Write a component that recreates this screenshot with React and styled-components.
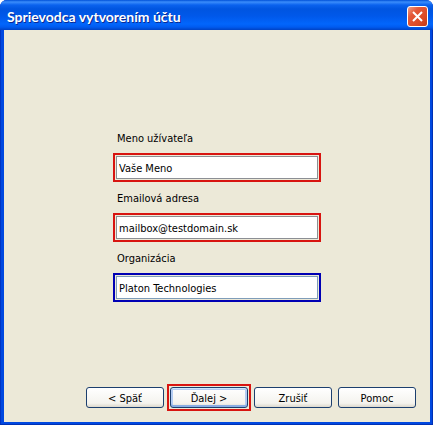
import React from "react";
import styled, { createGlobalStyle } from "styled-components";

const GlobalStyle = createGlobalStyle`
  * {
    box-sizing: border-box;
  }
  body {
    margin: 0;
    background: #fff;
    font-family: "DejaVu Sans Condensed", "Noto Sans", sans-serif;
    font-size: 11px;
    color: #000;
  }
`;

const Window = styled.div`
  display: flex;
  flex-direction: column;
  min-height: 100vh;
  border-radius: 7px 7px 0 0;
  background: #0048e0;
  box-shadow: inset -1px -1px 0 #0030b4, inset 1px 0 0 #0034c4;
  overflow: hidden;
`;

const TitleBar = styled.header`
  display: flex;
  align-items: center;
  justify-content: space-between;
  height: 30px;
  padding: 3px 5px 0 7px;
  background: linear-gradient(
    #0050d8 0,
    #3b8dfb 2px,
    #0a62ee 5px,
    #0055e0 9px,
    #0058ea 16px,
    #0266fc 24px,
    #005bf0 27px,
    #0042c4 30px
  );
`;

const Title = styled.h1`
  margin: 0;
  font-family: Lato, sans-serif;
  font-size: 14px;
  line-height: 20px;
  font-weight: 700;
  color: #fff;
  text-shadow: 1px 1px 0 #0a2a94;
`;

const CloseButton = styled.button`
  display: flex;
  align-items: center;
  justify-content: center;
  width: 21px;
  height: 21px;
  padding: 0;
  border: 1px solid #fff;
  border-radius: 3px;
  background: linear-gradient(135deg, #f0a088 0, #e4593a 30%, #dc4a24 70%, #c03a18);
`;

const Body = styled.main`
  display: flex;
  flex: 1;
  flex-direction: column;
  margin: 0 3px 3px 4px;
  background: #ece9d8;
`;

const Form = styled.form`
  display: flex;
  flex: 1;
  flex-direction: column;
`;

const Fields = styled.div`
  display: flex;
  flex: 1;
  flex-direction: column;
  gap: 9px;
  width: 208px;
  margin: 0 auto;
  padding-top: 101px;
`;

const Label = styled.label`
  display: block;
  padding: 0 4px;
  margin-bottom: 6px;
  line-height: 16px;
`;

const Frame = styled.div`
  padding: 1px;
  border: 2px solid ${props => props.$color};
`;

const Input = styled.input`
  display: block;
  width: 100%;
  height: 23px;
  padding: 2px 2px 0;
  border: 1px solid ${props => props.$line};
  background: #fff;
  color: #000;
  font: inherit;
  outline: none;
`;

const Buttons = styled.footer`
  display: flex;
  justify-content: flex-end;
  gap: 6px;
  padding: 14px;
`;

const Button = styled.button`
  display: block;
  width: 78px;
  height: 21px;
  padding: 2px 0 0;
  border: 1px solid #1c3f6e;
  border-radius: 3px;
  background: linear-gradient(#fff, #f4f3ee 80%, #dcd8cc);
  color: #000;
  font: inherit;
  line-height: 16px;
`;

const ButtonFrame = styled(Frame)`
  margin: -3px;
`;

const DefaultButton = styled(Button)`
  box-shadow: inset 0 1px 0 #cee7ff, inset 0 -2px 0 #89ade4, inset 0 0 0 2px #b4ccf2;
`;

const red = "#d81410";

const fields = [
  { id: "name", label: "Meno užívateľa", value: "Vaše Meno", color: red, line: "#8c8f94" },
  { id: "email", label: "Emailová adresa", value: "mailbox@testdomain.sk", color: red, line: "#8c8f94" },
  { id: "org", label: "Organizácia", value: "Platon Technologies", color: "#0000b4", line: "#7f9db9" }
];

const handleSubmit = e => {
  e.preventDefault();
};

const App = () => {
  return (
    <>
      <GlobalStyle />
      <Window>
        <TitleBar>
          <Title>Sprievodca vytvorením účtu</Title>
          <CloseButton type="button" aria-label="Zavrieť">
            <svg width="13" height="13" viewBox="0 0 13 13">
              <path d="M2 2L11 11M11 2L2 11" stroke="#fff" strokeWidth="2" />
            </svg>
          </CloseButton>
        </TitleBar>
        <Body>
          <Form onSubmit={handleSubmit}>
            <Fields>
              {fields.map(field => (
                <div key={field.id}>
                  <Label htmlFor={field.id}>{field.label}</Label>
                  <Frame $color={field.color}>
                    <Input id={field.id} type="text" defaultValue={field.value} $line={field.line} spellCheck={false} />
                  </Frame>
                </div>
              ))}
            </Fields>
            <Buttons>
              <Button type="button">&lt; Späť</Button>
              <ButtonFrame $color={red}>
                <DefaultButton type="submit">Ďalej &gt;</DefaultButton>
              </ButtonFrame>
              <Button type="button">Zrušiť</Button>
              <Button type="button">Pomoc</Button>
            </Buttons>
          </Form>
        </Body>
      </Window>
    </>
  );
};

export default App;
